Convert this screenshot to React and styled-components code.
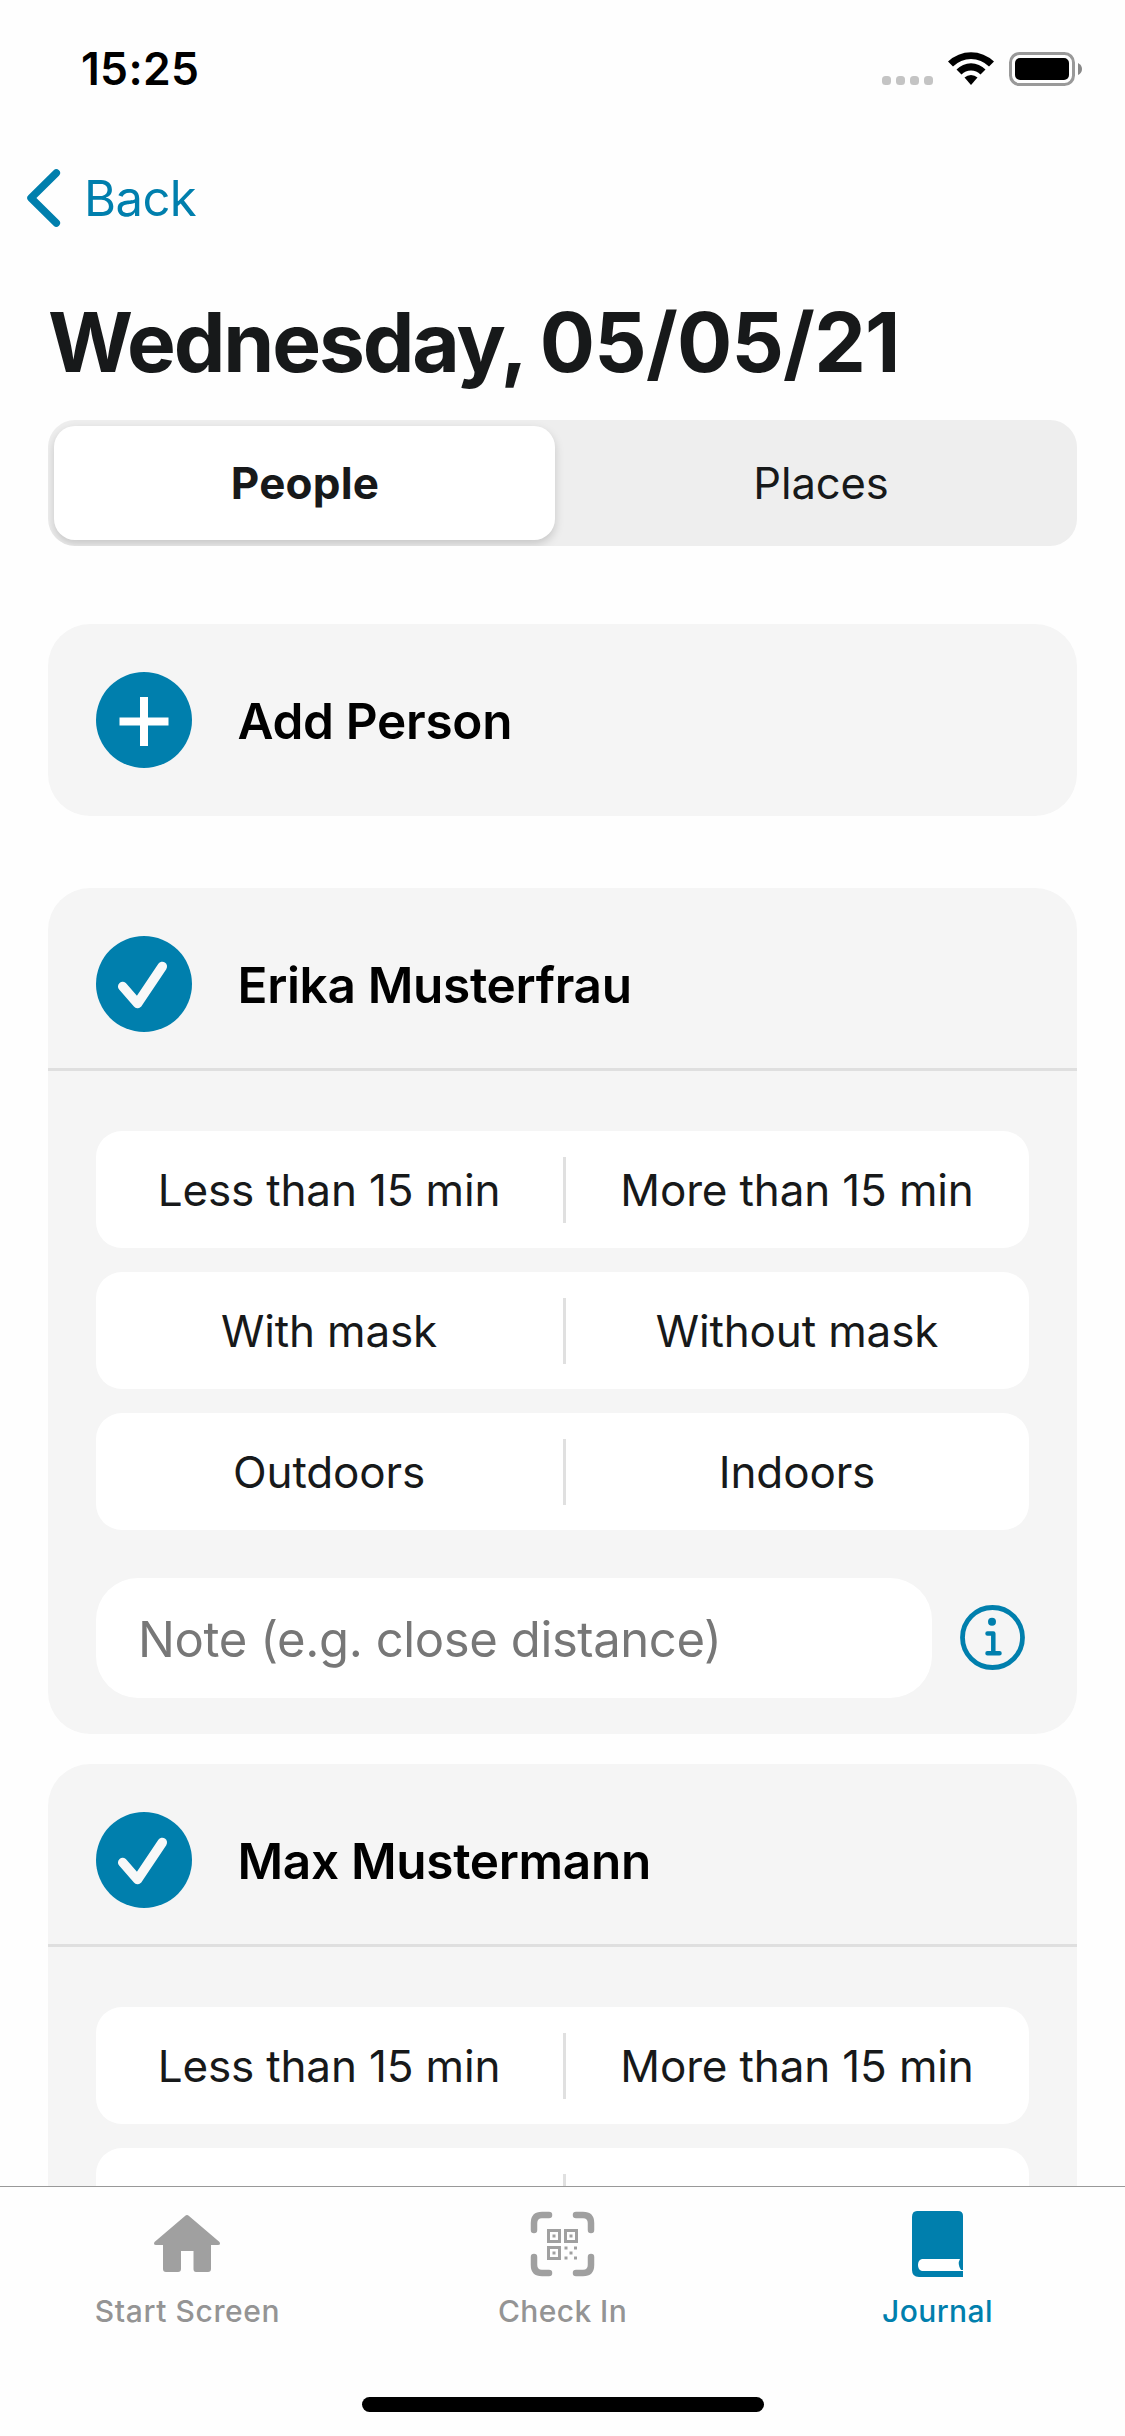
import React from "react";
import styled, { createGlobalStyle } from "styled-components";

const BLUE = "#007fad";
const INK = "#17191a";
const FONT = `Inter, "Liberation Sans", sans-serif`;

const GlobalStyle = createGlobalStyle`
  * { box-sizing: border-box; }
  body { margin: 0; background: #fefefe; font-family: ${FONT}; overflow: hidden; }
`;

const Screen = styled.div`
  width: 1125px;
  height: 2436px;
  display: flex;
  flex-direction: column;
  overflow: hidden;
  background: #fefefe;
`;

const StatusBar = styled.header`
  flex: none;
  height: 132px;
  padding: 7px 42px 0 81px;
  display: flex;
  align-items: center;
  justify-content: space-between;
`;

const Text = styled.span`
  display: block;
  white-space: nowrap;
  line-height: 1.2;
  font-size: ${(p) => p.$size}px;
  font-weight: ${(p) => p.$weight || 400};
  letter-spacing: ${(p) => p.$track || 0}px;
  color: ${(p) => p.$color || INK};
`;

const StatusIcons = styled.div`
  display: flex;
  padding-bottom: 3px;
`;

const NavBar = styled.nav`
  flex: none;
  height: 132px;
  padding: 0 24px;
  display: flex;
  align-items: center;
  gap: 20px;
`;

const NavLabel = styled(Text)`
  padding-top: 2px;
`;

const Title = styled.h1`
  flex: none;
  margin: 0;
  height: 156px;
  padding: 29px 0 0 48px;
  display: flex;
  gap: 14px;
  font-size: 82px;
  line-height: 100px;
  font-weight: 700;
  color: ${INK};
  white-space: nowrap;
`;

const TitlePart = styled.span`
  letter-spacing: ${(p) => p.$track}px;
`;

const Content = styled.main`
  flex: 1;
  min-height: 0;
  overflow: hidden;
  padding: 0 48px;
  display: flex;
  flex-direction: column;
`;

const Segments = styled.div`
  flex: none;
  height: 126px;
  padding: 6px;
  margin-bottom: 78px;
  border-radius: 27px;
  background: #eee;
  overflow: hidden;
  display: grid;
  grid-template-columns: 501px 1fr;
`;

const Segment = styled.button`
  border: 0;
  padding: 0 0 0 ${(p) => (p.$active ? 1 : 16)}px;
  border-radius: 21px;
  font-family: inherit;
  display: flex;
  align-items: center;
  justify-content: center;
  background: ${(p) => (p.$active ? "#fff" : "transparent")};
  box-shadow: ${(p) => (p.$active ? "0 4px 10px rgba(0,0,0,.17)" : "none")};
`;

const Card = styled.section`
  flex: none;
  margin-bottom: ${(p) => p.$gap}px;
  border-radius: 42px;
  background: #f5f5f5;
`;

const CardHead = styled.div`
  display: flex;
  align-items: center;
  gap: 45.5px;
  padding: 48px 48px ${(p) => (p.$divided ? 36 : 48)}px;
  border-bottom: ${(p) => (p.$divided ? "3px solid #dfdfdf" : "0")};
`;

const CardName = styled(Text)`
  padding-top: 3px;
`;

const Disc = styled.div`
  flex: none;
  width: 96px;
  height: 96px;
  border-radius: 50%;
  background: ${BLUE};
  svg { display: block; }
`;

const CardBody = styled.div`
  padding: 60px 48px 36px;
`;

const Options = styled.div`
  display: flex;
  flex-direction: column;
  gap: 24px;
  margin-bottom: 48px;
`;

const OptionRow = styled.div`
  height: 117px;
  padding-top: 1px;
  border-radius: 26px;
  background: #fff;
  display: grid;
  grid-template-columns: 467px 3px 1fr;
  align-items: center;
  justify-items: center;
`;

const Divider = styled.i`
  grid-column: 2;
  width: 3px;
  height: 66px;
  background: #e0e0e0;
`;

const OptionLabel = styled(Text)`
  padding: 1px 1px 0 0;
`;

const NoteRow = styled.div`
  display: flex;
  align-items: center;
  gap: 28px;
`;

const NoteField = styled.div`
  width: 836px;
  height: 120px;
  padding: 4px 42px 0;
  border-radius: 42px;
  background: #fff;
  display: flex;
  align-items: center;
`;

const TabBar = styled.footer`
  flex: none;
  height: 250px;
  border-top: 1px solid #999;
  background: #fefefe;
  display: flex;
  flex-direction: column;
  align-items: center;
`;

const Tabs = styled.div`
  width: 100%;
  height: 210px;
  display: grid;
  grid-template-columns: repeat(3, 1fr);
`;

const Tab = styled.div`
  display: flex;
  flex-direction: column;
  align-items: center;
  padding-top: 20px;
  gap: 14px;
`;

const HomeIndicator = styled.div`
  width: 402px;
  height: 15px;
  border-radius: 8px;
  background: #000;
`;

const StatusGlyphs = () => (
  <svg width="202" height="40" viewBox="0 0 202 40">
    <g fill="#c4c4c4">
      {[0, 14, 28, 42].map((x) => (
        <rect key={x} x={x + 1} y="28" width="9" height="9" rx="3.5" />
      ))}
    </g>
    <svg x="67" y="4" width="46" height="34" viewBox="0 0 46 34">
      <path d="M0 9.5 A33.5 33.5 0 0 1 46 9.5 L41 14.5 A25.5 25.5 0 0 0 5 14.5 Z" />
      <path d="M8.5 17.5 A20 20 0 0 1 37.5 17.5 L32.5 22.5 A13.5 13.5 0 0 0 13.5 22.5 Z" />
      <path d="M16.5 25.5 A9.5 9.5 0 0 1 29.5 25.5 L23 33 Z" />
    </svg>
    <rect x="129.5" y="5.5" width="63" height="31" rx="9" fill="none" stroke="#999" strokeWidth="3" />
    <rect x="134" y="10" width="54" height="22" rx="5" />
    <path d="M197 15 Q201 17 201 21 Q201 25 197 27 Z" fill="#888" />
  </svg>
);

const Chevron = () => (
  <svg width="40" height="60" viewBox="0 0 40 60">
    <path d="M32.3 5 L7 30 L32.3 55" fill="none" stroke={BLUE} strokeWidth="7.5" strokeLinecap="round" strokeLinejoin="round" />
  </svg>
);

const Plus = () => (
  <svg width="96" height="96" viewBox="0 0 96 96">
    <path d="M48 25 V74 M23.5 49.5 H72.5" stroke="#fff" strokeWidth="8" />
  </svg>
);

const Check = () => (
  <svg width="96" height="96" viewBox="0 0 96 96">
    <path d="M26.7 50.5 L41.5 67.5 L66.3 30.5" fill="none" stroke="#f8f8f8" strokeWidth="9.5" strokeLinecap="round" strokeLinejoin="round" />
  </svg>
);

const InfoIcon = () => (
  <svg width="66" height="66" viewBox="0 0 66 66">
    <circle cx="32.5" cy="32.5" r="30" fill="none" stroke={BLUE} strokeWidth="4.8" />
    <circle cx="32" cy="16.7" r="4" fill={BLUE} />
    <path d="M27.5 28.5 H33.3 V48.3 M27.5 48.3 H39.5" fill="none" stroke={BLUE} strokeWidth="4.5" strokeLinecap="round" strokeLinejoin="round" />
  </svg>
);

const HomeIcon = () => (
  <svg width="72" height="72" viewBox="0 0 72 72" fill="#a0a0a0">
    <path d="M33 9 Q35 7 37 9 L67.5 35 Q69 38 66 38 H59 V62 Q59 65 56 65 H44 Q41.5 65 41.5 62 V44 H29 V62 Q29 65 26 65 H14 Q11 65 11 62 V38 H4 Q1 38 2.5 35 Z" />
  </svg>
);

const QrIcon = () => (
  <svg width="72" height="72" viewBox="0 0 72 72" fill="none" stroke="#a0a0a0">
    <path d="M7 23 V16 Q7 8 15 8 H22 M49 8 H56 Q64 8 64 16 V23 M64 50 V58 Q64 66 56 66 H49 M22 66 H15 Q7 66 7 58 V50" strokeWidth="6.5" strokeLinecap="round" />
    <path d="M21.5 23.5 h11 v11 h-11 Z M38.5 23.5 h11 v11 h-11 Z M21.5 40.5 h11 v11 h-11 Z" strokeWidth="3" />
    <path d="M25.5 29 h3 M42.5 29 h3 M25.5 46 h3 M37.5 41 h3 M47 41 h3 M42.5 46 h3 M37.5 51 h3 M47 51 h3" strokeWidth="3.2" />
  </svg>
);

const BookIcon = () => (
  <svg width="72" height="72" viewBox="0 0 72 72">
    <path d="M15 4 H56 Q61 4 61 9 V70 H17 Q10 70 10 63 V10 Q10 4 15 4 Z" fill={BLUE} />
    <path d="M20 52 H58 Q55 57 59 63 H62 V64 H20 Q16 63 16 58 Q16 53 20 52 Z" fill="#fff" />
  </svg>
);

const options = [
  ["Less than 15 min", "More than 15 min"],
  ["With mask", "Without mask"],
  ["Outdoors", "Indoors"],
];

const OptionPair = ({ labels }) => (
  <OptionRow>
    {labels && <OptionLabel $size={44} $track={-0.15}>{labels[0]}</OptionLabel>}
    <Divider />
    {labels && <OptionLabel $size={44} $track={-0.15}>{labels[1]}</OptionLabel>}
  </OptionRow>
);

const PersonCard = ({ name, cutOff }) => (
  <Card $gap={30}>
    <CardHead $divided>
      <Disc><Check /></Disc>
      <CardName $size={49.5} $weight={600} $color="#000" $track={-0.32}>{name}</CardName>
    </CardHead>
    <CardBody>
      <Options>
        {(cutOff ? options.slice(0, 1) : options).map((labels) => (
          <OptionPair key={labels[0]} labels={labels} />
        ))}
        {cutOff && <OptionPair />}
      </Options>
      {!cutOff && (
        <NoteRow>
          <NoteField>
            <Text $size={49} $track={-0.4} $color="#777">Note (e.g. close distance)</Text>
          </NoteField>
          <InfoIcon />
        </NoteRow>
      )}
    </CardBody>
  </Card>
);

export default function App() {
  return (
    <Screen>
      <GlobalStyle />
      <StatusBar>
        <Text $size={44.5} $weight={600} $track={0.3} $color="#000">15:25</Text>
        <StatusIcons><StatusGlyphs /></StatusIcons>
      </StatusBar>
      <NavBar>
        <Chevron />
        <NavLabel $size={49} $track={-0.6} $color={BLUE}>Back</NavLabel>
      </NavBar>
      <Title>
        <TitlePart $track={-2.1}>Wednesday,</TitlePart>
        <TitlePart $track={-0.8}>05/05/21</TitlePart>
      </Title>
      <Content>
        <Segments>
          <Segment $active><Text $size={44} $weight={700} $track={0.2}>People</Text></Segment>
          <Segment><Text $size={43.5} $track={-0.1}>Places</Text></Segment>
        </Segments>
        <Card $gap={72}>
          <CardHead>
            <Disc><Plus /></Disc>
            <CardName $size={49.5} $weight={600} $track={-0.3} $color="#000">Add Person</CardName>
          </CardHead>
        </Card>
        <PersonCard name="Erika Musterfrau" />
        <PersonCard name="Max Mustermann" cutOff />
      </Content>
      <TabBar>
        <Tabs>
          <Tab><HomeIcon /><Text $size={30} $weight={500} $track={0.6} $color="#949494">Start Screen</Text></Tab>
          <Tab><QrIcon /><Text $size={30} $weight={500} $track={0.4} $color="#949494">Check In</Text></Tab>
          <Tab><BookIcon /><Text $size={30} $weight={500} $track={0.4} $color={BLUE}>Journal</Text></Tab>
        </Tabs>
        <HomeIndicator />
      </TabBar>
    </Screen>
  );
}
